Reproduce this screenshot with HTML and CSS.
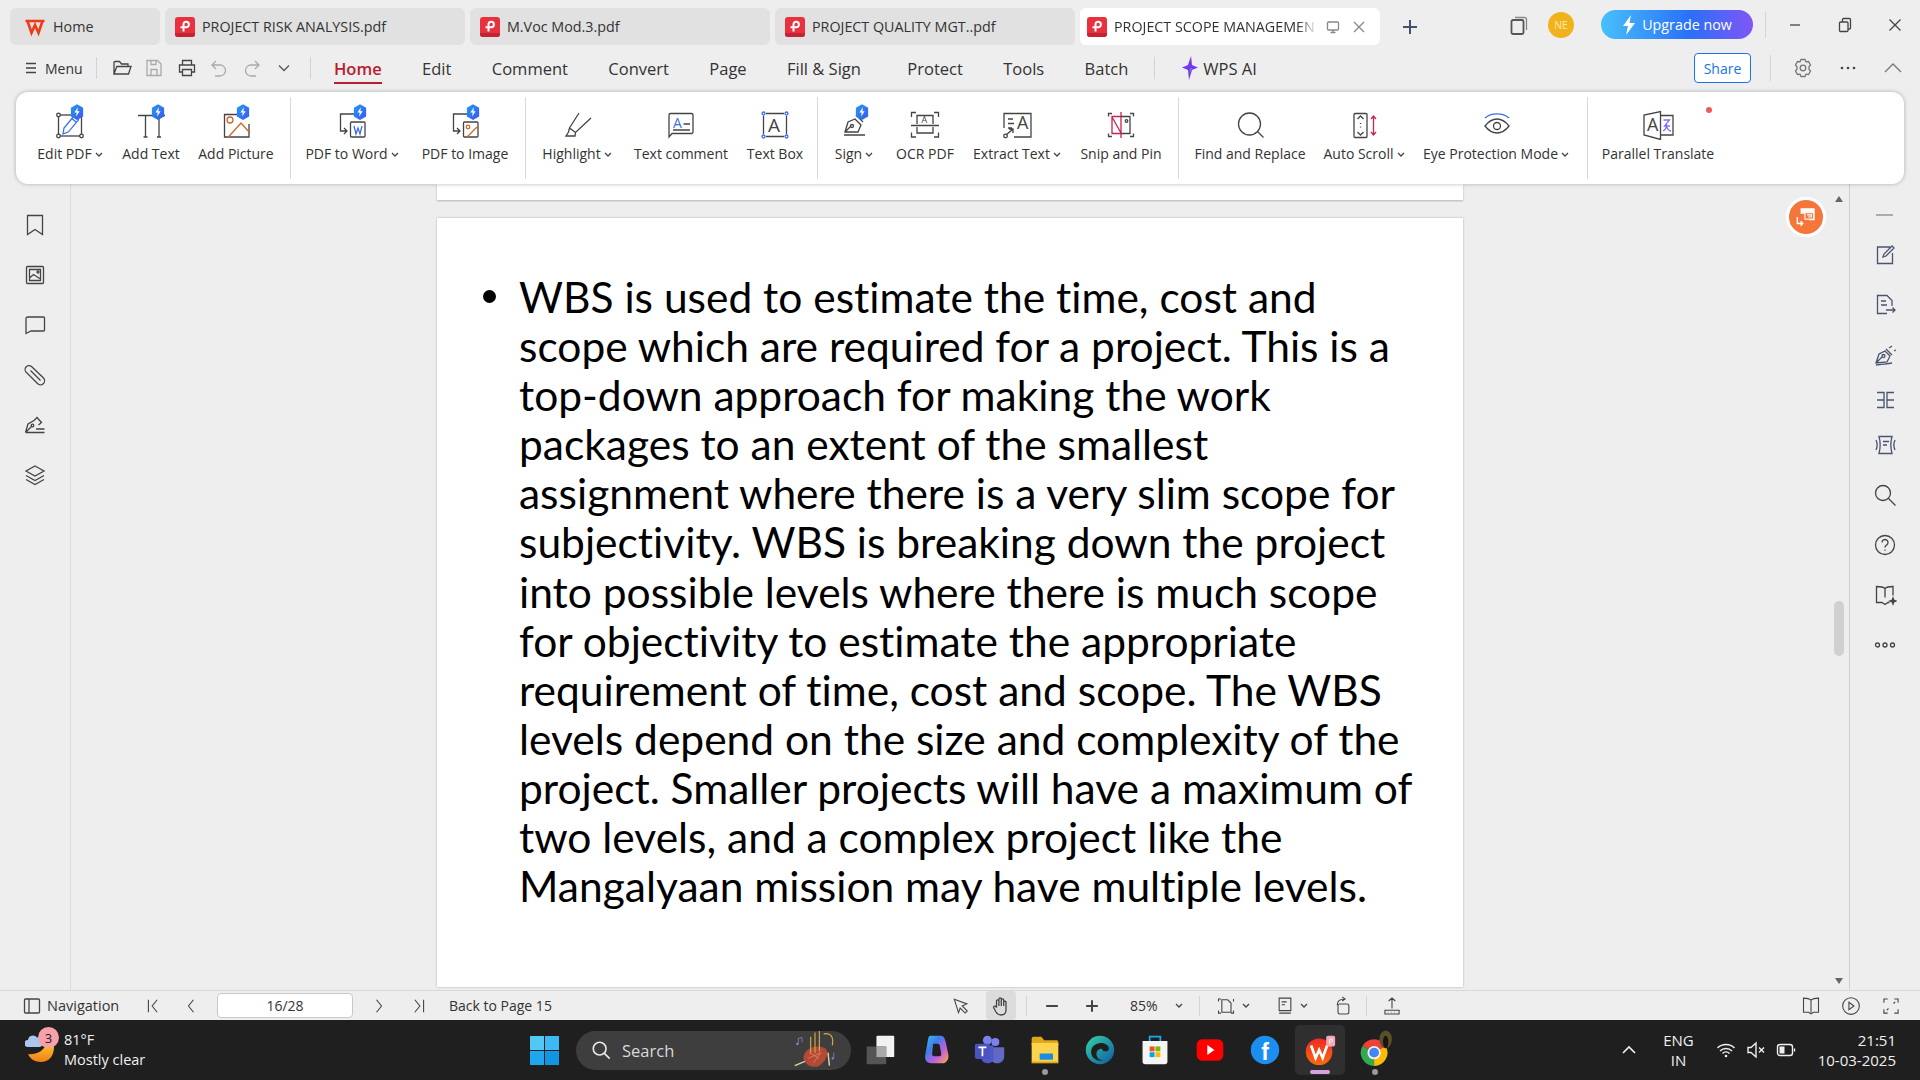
FILE: index.html
```html
<!DOCTYPE html>
<html>
<head>
<meta charset="UTF-8">
<title>PROJECT SCOPE MANAGEMENT.pdf</title>
<link rel="stylesheet" href="styles.css">
</head>
<body>
<svg class="defs" width="0" height="0">
  <defs>
    <linearGradient id="bdg" x1="0" y1="0" x2="1" y2="1"><stop offset="0" stop-color="#1f9cf6"/><stop offset="1" stop-color="#3f55f2"/></linearGradient>
    <linearGradient id="moon" x1="0" y1="0" x2="0" y2="1"><stop offset="0" stop-color="#fbc02d"/><stop offset="1" stop-color="#f07d1a"/></linearGradient>
    <linearGradient id="cop" x1="0" y1="0" x2="1" y2="1"><stop offset="0" stop-color="#2fc0f2"/><stop offset=".35" stop-color="#3f7fe8"/><stop offset=".65" stop-color="#c65ce0"/><stop offset="1" stop-color="#f7b13a"/></linearGradient>
    <linearGradient id="edge" x1="0" y1="0" x2="1" y2="1"><stop offset="0" stop-color="#39d2a8"/><stop offset="1" stop-color="#0c59a4"/></linearGradient>
    <linearGradient id="wpsg" x1="0" y1="0" x2="0" y2="1"><stop offset="0" stop-color="#ee2a24"/><stop offset="1" stop-color="#f86a10"/></linearGradient>
    <symbol id="badge" viewBox="0 0 16 18">
      <path d="M8 0l7 4v10l-7 4-7-4V4z" fill="url(#bdg)" stroke="none"/>
      <path d="M9 3.500L5 9.600h2.600L7 14l4-6H8.400z" fill="#fff" stroke="none"/>
    </symbol>
    <symbol id="pdf" viewBox="0 0 20 20">
      <rect width="20" height="20" rx="3" fill="#e8303f"/>
      <path d="M0 16h20v1a3 3 0 0 1-3 3H3a3 3 0 0 1-3-3z" fill="#c22433"/>
      <path d="M8.500 14.500V7.500a2.700 2.700 0 1 1 2.700 2.700H5.500" fill="none" stroke="#fff" stroke-width="2"/>
    </symbol>
    <symbol id="caret" viewBox="0 0 8 5"><path d="M1 1l3 3 3-3" fill="none" stroke="#444" stroke-width="1.300"/></symbol>
  </defs>
</svg>

<div class="titlebar">
  <div class="tab tab-home">
    <svg class="tab-ico" viewBox="0 0 20 20"><path class="wps-mark" d="M.5 4h19M2.500 4l4 12 3.500-8 3.500 8 4-12"/></svg>
    <span>Home</span>
  </div>
  <div class="tab"><svg class="tab-ico"><use href="#pdf"/></svg><span>PROJECT RISK ANALYSIS.pdf</span></div>
  <div class="tab"><svg class="tab-ico"><use href="#pdf"/></svg><span>M.Voc Mod.3.pdf</span></div>
  <div class="tab"><svg class="tab-ico"><use href="#pdf"/></svg><span>PROJECT QUALITY MGT..pdf</span></div>
  <div class="tab tab-active">
    <svg class="tab-ico"><use href="#pdf"/></svg>
    <span class="tab-clip">PROJECT SCOPE MANAGEMEN</span>
    <svg class="ico16" viewBox="0 0 16 16"><rect x="2.500" y="3" width="11" height="8" rx="1"/><path d="M8 11v2.500M5.500 13.500h5"/></svg>
    <svg class="ico16 tab-x" viewBox="0 0 16 16"><path d="M3 3l10 10M13 3L3 13"/></svg>
  </div>
  <svg class="tab-plus" viewBox="0 0 16 16"><path d="M8 1v14M1 8h14"/></svg>
  <div class="win-area">
    <svg class="ico20 restore" viewBox="0 0 20 20"><rect x="2.500" y="5" width="12" height="14" rx="1.500"/><path class="restore-back" d="M6 2.500h9.500a2 2 0 0 1 2 2V15"/></svg>
    <div class="avatar">NE</div>
    <div class="upgrade">
      <svg class="bolt" viewBox="0 0 14 20"><path d="M9 0L1 11h5l-2 9 9-12H7.500z" fill="#fff"/></svg>
      <span>Upgrade now</span>
    </div>
    <div class="vsep vsep-win"></div>
    <svg class="ico16 win-btn win-min" viewBox="0 0 16 16"><path d="M3 8h10"/></svg>
    <svg class="ico16 win-btn win-max" viewBox="0 0 16 16"><rect x="2.500" y="5" width="8.500" height="9.500" rx="1"/><path d="M5.500 5V2.500a1 1 0 0 1 1-1h6a1 1 0 0 1 1 1V11a1 1 0 0 1-1 1H11"/></svg>
    <svg class="ico16 win-btn" viewBox="0 0 16 16"><path d="M2.500 2.500l11 11M13.500 2.500l-11 11"/></svg>
  </div>
</div>

<div class="menubar">
  <div class="menu-btn">
    <svg class="ico14" viewBox="0 0 14 14"><path d="M2 2.500h10M2 7h10M2 11.500h10"/></svg>
    <span>Menu</span>
  </div>
  <div class="vsep vsep-q1"></div>
  <div class="quick">
    <svg class="ico20" viewBox="0 0 20 20"><path d="M2 16V4.500a1 1 0 0 1 1-1h4.500l2 2.500H16v2.500M2 16l2.800-7.500H19L16.500 16z"/></svg>
    <svg class="ico20 faded" viewBox="0 0 20 20"><path d="M3 2.500h10.500L17 6v11.500H3zM7 2.500v4h5v-4M7 17.500v-6h6v6"/></svg>
    <svg class="ico20" viewBox="0 0 20 20"><path d="M5.500 7V2.500h9V7M5.500 14H2.500V7h15v7h-3M5.500 11.500h9v6h-9z"/></svg>
    <svg class="ico20 faded" viewBox="0 0 20 20"><path d="M7 3L3 7l4 4M3 7h8a5.500 5.500 0 0 1 0 11H6"/></svg>
    <svg class="ico20 faded" viewBox="0 0 20 20"><path d="M13 3l4 4-4 4M17 7H9a5.500 5.500 0 0 0 0 11h5"/></svg>
    <svg class="ico20 ico-c" viewBox="0 0 20 20"><path d="M5 7.500l5 5 5-5"/></svg>
  </div>
  <div class="vsep vsep-q2"></div>
  <nav class="menu-tabs">
    <span class="active">Home</span>
    <span>Edit</span>
    <span>Comment</span>
    <span>Convert</span>
    <span>Page</span>
    <span>Fill &amp; Sign</span>
    <span class="m-protect">Protect</span>
    <span>Tools</span>
    <span>Batch</span>
  </nav>
  <div class="vsep vsep-ai"></div>
  <div class="wps-ai">
    <svg class="ai-ico" viewBox="0 0 16 24"><path d="M9 0L6 9 0 11.500 6 14l1 10 3-10 6-2.500L10 9z" fill="#7a35f0"/><path d="M8.500 12l-1.500 6 3-6z" fill="#3aa5f5"/></svg>
    <span>WPS AI</span>
  </div>
  <div class="menu-right">
    <div class="share">Share</div>
    <div class="vsep vsep-share"></div>
    <svg class="ico20 gear" viewBox="0 0 20 20"><path d="M8 1.500h4l1 2.300 2.500-.3 2 3.500L16 8.800v2.400l1.500 1.800-2 3.500-2.500-.3-1 2.300H8l-1-2.300-2.500.3-2-3.500L4 11.200V8.800L2.500 7l2-3.500 2.500.3z"/><circle cx="10" cy="10" r="2.800"/></svg>
    <svg class="ico20 dots" viewBox="0 0 20 20"><circle cx="4" cy="10" r="1.300"/><circle cx="10" cy="10" r="1.300"/><circle cx="16" cy="10" r="1.300"/></svg>
    <svg class="ico20 gear" viewBox="0 0 20 20"><path d="M2 14l8-8 8 8"/></svg>
  </div>
</div>

<div class="ribbon">
  <div class="rgroup g1">
    <div class="tool w80">
      <svg class="ric" viewBox="0 0 44 36"><rect x="10.500" y="11" width="23" height="21"/><g class="knob"><circle cx="10.500" cy="11" r="1.800"/><circle cx="10.500" cy="32" r="1.800"/><circle cx="33.500" cy="32" r="1.800"/></g><path class="blue" d="M15 30l1-6 10-12 4.500 3.800-10 12zM23.800 14.500l4.500 3.800"/><use href="#badge" x="22" y="0" width="14" height="16"/></svg>
      <div class="lbl">Edit PDF<svg class="caret"><use href="#caret"/></svg></div>
    </div>
    <div class="tool w82">
      <svg class="ric" viewBox="0 0 44 36"><path d="M9 11.500h27M16.500 11.500V33M30 11.500V33M14.500 33h4M28 33h4"/><use href="#badge" x="22" y="0" width="14" height="16"/></svg>
      <div class="lbl">Add Text</div>
    </div>
    <div class="tool w88">
      <svg class="ric" viewBox="0 0 44 36"><path d="M30 10.500H10.500V33h24.500V20"/><circle class="orange" cx="16" cy="16" r="3"/><path class="orange" d="M14 33.500L27 19l9 10"/><use href="#badge" x="22" y="0" width="14" height="16"/></svg>
      <div class="lbl">Add Picture</div>
    </div>
  </div>
  <div class="rgroup g2">
    <div class="tool w116">
      <svg class="ric" viewBox="0 0 44 36"><path d="M27 10H10.500v17H17M14 24l3 3-3 3"/><rect x="20.500" y="18" width="14.500" height="15" rx="1"/><path class="blue" d="M24 22l2 8 2-6 2 6 2-8"/><use href="#badge" x="23" y="0" width="14" height="16"/></svg>
      <div class="lbl">PDF to Word<svg class="caret"><use href="#caret"/></svg></div>
    </div>
    <div class="tool w110">
      <svg class="ric" viewBox="0 0 44 36"><path d="M27 10H10.500v17H17M14 24l3 3-3 3"/><rect x="20.500" y="18" width="14.500" height="15" rx="1"/><circle class="orange" cx="25" cy="23" r="1.800"/><path class="orange" d="M24 33l10-10"/><use href="#badge" x="23" y="0" width="14" height="16"/></svg>
      <div class="lbl">PDF to Image</div>
    </div>
  </div>
  <div class="rgroup g3">
    <div class="tool w90">
      <svg class="ric" viewBox="0 0 44 36"><path d="M24 9L14.500 24l6 4.500L36 14M14.500 24l-1 4-2.500 4h9l.5-3.500"/></svg>
      <div class="lbl">Highlight<svg class="caret"><use href="#caret"/></svg></div>
    </div>
    <div class="tool w118">
      <svg class="ric" viewBox="0 0 44 36"><path d="M11.500 9.500h21a1.500 1.500 0 0 1 1.500 1.500v17a1.500 1.500 0 0 1-1.500 1.500H13L10 33V11a1.500 1.500 0 0 1 1.500-1.500zM24.500 20H31M14 26h17"/><text class="svg-a blue-t" x="14" y="23.500">A</text></svg>
      <div class="lbl">Text comment</div>
    </div>
    <div class="tool w70">
      <svg class="ric" viewBox="0 0 44 36"><path d="M13 9.500h18M13 32.500h18M10.500 12v18M33.500 12v18"/><g class="knob-b"><circle cx="10.500" cy="9.500" r="1.500"/><circle cx="33.500" cy="9.500" r="1.500"/><circle cx="10.500" cy="32.500" r="1.500"/><circle cx="33.500" cy="32.500" r="1.500"/></g><text class="svg-a svg-big" x="15" y="28">A</text></svg>
      <div class="lbl">Text Box</div>
    </div>
  </div>
  <div class="rgroup g4">
    <div class="tool w60">
      <svg class="ric" viewBox="0 0 44 36"><path d="M12 31h21M13 28l3-10 7-3 6 6-3 7zM13 28l6-6M24 11l7 7"/><circle cx="20" cy="22" r="1.500"/><use href="#badge" x="23" y="0" width="14" height="16"/></svg>
      <div class="lbl">Sign<svg class="caret"><use href="#caret"/></svg></div>
    </div>
    <div class="tool w82">
      <svg class="ric" viewBox="0 0 44 36"><path d="M13 8.500H8.500V13M31 8.500h4.500V13M13 33h-4.500v-4.500M31 33h4.500v-4.500M14 20V11.500h16V20M14 23v6h16v-6M8 21.500h28"/><text class="svg-a svg-sm" x="18.500" y="19">A</text></svg>
      <div class="lbl">OCR PDF</div>
    </div>
    <div class="tool w102">
      <svg class="ric" viewBox="0 0 44 36"><path d="M9 24V9.500h27V33H19M13 15h5M13 19.500h6M13 24h4M18 25l-7 6M14 25h4v4"/><circle cx="10.500" cy="32" r="1.800"/><text class="svg-a svg-mid" x="22" y="25">A</text></svg>
      <div class="lbl">Extract Text<svg class="caret"><use href="#caret"/></svg></div>
    </div>
    <div class="tool w106">
      <svg class="ric" viewBox="0 0 44 36"><path d="M13 9.500H9.500v3M31 9.500h3.500v3M13 32.500H9.500v-3M31 32.500h3.500v-3"/><path class="red" d="M13 12.500h9v17h-9zM13 13l9 16M22 8v26"/><path d="M22 12.500h9v17h-9"/><circle cx="27.500" cy="17" r="1.300"/></svg>
      <div class="lbl">Snip and Pin</div>
    </div>
  </div>
  <div class="rgroup g5">
    <div class="tool w130">
      <svg class="ric" viewBox="0 0 44 36"><circle cx="21.500" cy="20" r="11"/><path d="M29.500 27.500l6 6"/></svg>
      <div class="lbl">Find and Replace</div>
    </div>
    <div class="tool w98">
      <svg class="ric" viewBox="0 0 44 36"><rect x="12" y="9.500" width="13" height="24" rx="1"/><path d="M15.500 15l3-3 3 3M15.500 28l3 3 3-3M18.500 19v1M18.500 22.500v1"/><path class="red" d="M31.500 12v19M29 15l2.500-3 2.500 3M29 28l2.500 3 2.500-3"/></svg>
      <div class="lbl">Auto Scroll<svg class="caret"><use href="#caret"/></svg></div>
    </div>
    <div class="tool w166">
      <svg class="ric" viewBox="0 0 44 36"><path class="blue" d="M11 14c6-5.500 18-5.500 24 0"/><path d="M11 22c3.500-4.500 7.500-7 12-7s8.500 2.500 12 7c-3.500 4.500-7.500 7-12 7s-8.500-2.500-12-7z"/><circle cx="23" cy="22" r="3.500"/></svg>
      <div class="lbl">Eye Protection Mode<svg class="caret"><use href="#caret"/></svg></div>
    </div>
  </div>
  <div class="rgroup g6">
    <div class="tool w126">
      <svg class="ric" viewBox="0 0 44 36"><path d="M24.500 7.500v28L8 31V11zM24.500 11.500H37v19.500H24.500"/><text class="svg-a svg-mid" x="11" y="27">A</text><path class="purple" d="M27.500 16h6l-5 6h5.500M30.500 20c0 4-1 6-3.500 7M30 21c1 3 3 6 5 6"/></svg>
      <div class="lbl">Parallel Translate</div>
    </div>
    <span class="red-dot"></span>
  </div>
</div>

<div class="main">
  <aside class="side-left">
    <svg class="ico24" viewBox="0 0 24 24"><path d="M4.500 2.500h15v19L12 16.500l-7.500 5z"/></svg>
    <svg class="ico24" viewBox="0 0 24 24"><rect x="3.500" y="3.500" width="17" height="17" rx="1"/><path d="M6.500 6.500h11v11h-11zM6.500 15l4-3.500 7 4.500"/><circle cx="15" cy="9" r="1"/></svg>
    <svg class="ico24" viewBox="0 0 24 24"><path d="M4.500 4h16a1 1 0 0 1 1 1v12a1 1 0 0 1-1 1H8l-5 2.500V5.500a1.500 1.500 0 0 1 1.500-1.500z"/></svg>
    <svg class="ico24" viewBox="0 0 24 24"><path d="M8.500 3.500l12 11.500a4 4 0 0 1-6 5.500L3.500 9.500a3.700 3.700 0 0 1 5-6zM7.500 7.500l10 10"/></svg>
    <svg class="ico24" viewBox="0 0 24 24"><path d="M2.500 19.500l2.500-8.500 6-3.500 3-3 4.500 5-3 2.500M2.500 19.500h9M2.500 19.500l6-6M13 16h8.500M11.500 19.500h10"/><circle cx="9.500" cy="12.500" r="1.300"/></svg>
    <svg class="ico24" viewBox="0 0 24 24"><path d="M12 3l9 5-9 5-9-5zM3 12.500l9 5 9-5M3 16.500l9 5 9-5"/></svg>
  </aside>

  <div class="doc">
    <div class="page-stub"></div>
    <div class="page">
      <span class="bullet"></span>
      <div class="page-text">
        <span>WBS is used to estimate the time, cost and</span>
        <span>scope which are required for a project. This is a</span>
        <span>top-down approach for making the work</span>
        <span>packages to an extent of the smallest</span>
        <span>assignment where there is a very slim scope for</span>
        <span>subjectivity. WBS is breaking down the project</span>
        <span>into possible levels where there is much scope</span>
        <span>for objectivity to estimate the appropriate</span>
        <span>requirement of time, cost and scope. The WBS</span>
        <span>levels depend on the size and complexity of the</span>
        <span>project. Smaller projects will have a maximum of</span>
        <span>two levels, and a complex project like the</span>
        <span>Mangalyaan mission may have multiple levels.</span>
      </div>
    </div>
  </div>

  <div class="scroll-col">
    <span class="arr-up"></span>
    <span class="thumb"></span>
    <span class="arr-down"></span>
  </div>

  <div class="float-btn">
    <svg viewBox="0 0 24 24"><path d="M7 4h13v11H15V9H7z" fill="#fff"/><rect x="11" y="8" width="8" height="6" fill="#f5763a" stroke="#fff"/><path d="M13 10h4v2h-3" fill="none" stroke="#fff"/><path d="M4 12v6h5M7 16l2 2-2 2" fill="none" stroke="#fff" stroke-width="1.300"/></svg>
  </div>

  <aside class="side-right">
    <svg class="ico24 sr first" viewBox="0 0 24 24"><path d="M3 12h17"/></svg>
    <svg class="ico24 sr" viewBox="0 0 24 24"><path d="M17 4H4.500v16.500h15V10M10 14l1-3 8-8 2 2-8 8z"/></svg>
    <svg class="ico24 sr" viewBox="0 0 24 24"><path d="M14 20.500H4.500v-18H14l5 5V13M8 8h5M8 12h6M13 17h9M19.500 14.500L22 17l-2.500 2.500"/></svg>
    <svg class="ico24 sr" viewBox="0 0 24 24"><path d="M3 20l3-9 6-3 5 5-3 6zM3 20l6-6M13 6l6 6M16 5l3-2M21 8l2-1M3 22c6-1 12-1 16-2"/><circle cx="10.500" cy="13" r="1.500"/></svg>
    <svg class="ico24 sr near" viewBox="0 0 24 24"><path d="M4 4.500h7v15H4M4 12h7M21 4.500h-7v15h7M14 12h7"/></svg>
    <svg class="ico24 sr near" viewBox="0 0 24 24"><path d="M6 3.500h13c-1.500 5.500-1.500 11.500 0 17H6c1.500-5.500 1.500-11.500 0-17zM10 8.500h6M10 12h4M3 7c1.500 3.500 1.500 7 0 10M22 7c-1.500 3.500-1.500 7 0 10"/></svg>
    <svg class="ico24 sr dark" viewBox="0 0 24 24"><circle cx="10" cy="10" r="7.500"/><path d="M15.500 15.500l7 7"/></svg>
    <svg class="ico24 sr dark" viewBox="0 0 24 24"><circle cx="12" cy="12" r="9.500"/><path d="M9 9.500a3 3 0 1 1 4.500 2.600c-1 .6-1.500 1.200-1.500 2.400M12 16.500v1.200"/></svg>
    <svg class="ico24 sr dark" viewBox="0 0 24 24"><path d="M12 5.500C10 3.500 6 3.500 3.500 3.500v16H9l3 2 3-2h1.500M12 5.500C14 3.500 18 3.500 20 3.500v9M12 5.500v9"/><path d="M20 15l.8 2.200 2.200.8-2.200.8-.8 2.200-.8-2.200-2.200-.8 2.200-.8z" fill="#444"/></svg>
    <svg class="ico24 sr dark" viewBox="0 0 24 24"><circle cx="4.500" cy="12" r="2"/><circle cx="12" cy="12" r="2"/><circle cx="19.500" cy="12" r="2"/></svg>
  </aside>
</div>

<div class="statusbar">
  <div class="sb-left">
    <svg class="ico18" viewBox="0 0 18 18"><rect x="1.500" y="2" width="15" height="14" rx="1"/><path d="M6 2v14"/></svg>
    <span class="nav-lbl">Navigation</span>
    <svg class="sb-btn sb-first" viewBox="0 0 24 24"><path d="M6.500 4.500v15M17 4.500l-6 7.500 6 7.500"/></svg>
    <svg class="sb-btn sb-prev" viewBox="0 0 24 24"><path d="M15 4.500l-6 7.500 6 7.500"/></svg>
    <div class="page-input">16/28</div>
    <svg class="sb-btn" viewBox="0 0 24 24"><path d="M9 4.500l6 7.500-6 7.500"/></svg>
    <svg class="sb-btn sb-last" viewBox="0 0 24 24"><path d="M17.500 4.500v15M7 4.500l6 7.500-6 7.500"/></svg>
    <span class="back-lbl">Back to Page 15</span>
  </div>
  <div class="sb-mid">
    <svg class="sb-btn sb-arrow" viewBox="0 0 24 24"><path d="M4 4l15 5.500-5.500 2.500 6 6-2.500 2.500-6-6L9 20z"/></svg>
    <div class="hand"><svg class="ico20" viewBox="0 0 20 20"><path d="M5.500 11V5a1.200 1.200 0 0 1 2.400 0V10V3a1.200 1.200 0 0 1 2.400 0v7-6a1.200 1.200 0 0 1 2.400 0v6-4a1.200 1.200 0 0 1 2.300 0v8c0 3-2 5-5 5-2.500 0-3.800-1-5-3l-2.200-4c-.8-1.500 1-2.600 2-1.300z"/></svg></div>
    <div class="vsep vsep-sb"></div>
    <svg class="sb-btn sb-minus" viewBox="0 0 24 24"><path class="thick" d="M5 12h14"/></svg>
    <svg class="sb-btn sb-plus" viewBox="0 0 24 24"><path class="thick" d="M5 12h14M12 5v14"/></svg>
    <span class="zoom-val">85%</span>
    <svg class="caret caret-z"><use href="#caret"/></svg>
    <div class="vsep vsep-sb vsep-z"></div>
    <svg class="sb-btn sb-fit" viewBox="0 0 24 24"><path d="M7 4.500h7l4 4v11H7zM3 6.500v-3h3M3 17.500v3h3M21 6.500v-3M21 17.500v3h-3"/></svg>
    <svg class="caret"><use href="#caret"/></svg>
    <svg class="sb-btn sb-view" viewBox="0 0 24 24"><path d="M5 2.500h14v15H5zM8 7h6M8 10.500h4M5 20.500h14"/></svg>
    <svg class="caret"><use href="#caret"/></svg>
    <svg class="sb-btn sb-rot" viewBox="0 0 24 24"><rect x="6" y="9.500" width="13" height="12" rx="2"/><path d="M5 11c0-5 3-7.500 9-7.500M11 1l3.500 2.500L11 6"/></svg>
    <div class="vsep vsep-sb vsep-e"></div>
    <svg class="sb-btn sb-exp" viewBox="0 0 24 24"><path d="M12 15V2.500M8 6l4-3.500L16 6M3.500 17h17v4.500h-17zM7 19.500h.5M11 19.500h.5M15 19.500h.5"/></svg>
  </div>
  <div class="sb-right">
    <svg class="sb-btn" viewBox="0 0 24 24"><path d="M12 5c-2-1.800-5-2.500-9-2.500v17h6l3 2 3-2h6v-17c-4 0-7 .7-9 2.500zM12 5v15"/></svg>
    <svg class="sb-btn" viewBox="0 0 24 24"><circle cx="12" cy="12" r="10"/><path d="M9.500 7.500l6 4.500-6 4.500z"/></svg>
    <svg class="sb-btn" viewBox="0 0 24 24"><path d="M8 3.500H3.500V8M16 3.500h4.500V8M8 20.500H3.500V16M16 20.500h4.500V16M15 9l2-2M7 17l2-2"/></svg>
  </div>
</div>

<div class="taskbar">
  <div class="weather">
    <svg class="weather-ico" viewBox="0 0 32 36"><path d="M3 22c5 1 14-1 18-9 5 0 8 0 8 2 0 10-6 15-13 15-6 0-11-3-13-8z" fill="url(#moon)"/><path d="M3 15a3.500 3.500 0 0 1 0-7 5 5 0 0 1 9-2.500A4 4 0 0 1 15 15z" fill="#a8c6ee"/></svg>
    <span class="w-badge">3</span>
    <div class="w-text"><span class="w-temp">81°F</span><span>Mostly clear</span></div>
  </div>
  <svg class="win-logo" viewBox="0 0 29 29">
    <rect width="14" height="14" fill="#54c8f5"/><rect x="15" width="14" height="14" fill="#3dbaf2"/>
    <rect y="15" width="14" height="14" fill="#1ea7ee"/><rect x="15" y="15" width="14" height="14" fill="#1296e4"/>
  </svg>
  <div class="search">
    <svg class="search-ico" viewBox="0 0 22 22"><circle cx="9.500" cy="9.500" r="7"/><path d="M14.500 14.500l6 6"/></svg>
    <span>Search</span>
    <svg class="bagpipe" viewBox="0 0 60 54">
      <path d="M14 36c2-14 20-18 30-12 6 5 2 18-8 24-10 5-22-2-22-12z" fill="#b24a35"/>
      <path d="M22 30l14 8M20 38l18-8M28 44l10-14" stroke="#e88a6a" fill="none"/>
      <path d="M30 2v28M36 0v28M24 8v22M42 4c10-2 14 4 12 16" stroke="#d8a84a" stroke-width="1.600" fill="none"/>
      <path d="M2 48l14-6M48 30l2 18" stroke="#e0d0a0" stroke-width="2" fill="none"/>
      <path d="M7 10v8M7 10l5-1v7" stroke="#8f86d6" fill="none"/><circle cx="5.500" cy="18" r="1.600" fill="#8f86d6"/>
      <path d="M56 30v8" stroke="#8f86d6"/><circle cx="54.500" cy="38" r="1.600" fill="#8f86d6"/>
    </svg>
  </div>
  <div class="apps">
    <div class="app">
      <svg viewBox="0 0 36 36"><rect x="14" y="2" width="20" height="24" rx="1" fill="#f2f2f2"/><rect x="3" y="14" width="22" height="20" rx="1" fill="#555"/><rect x="14" y="14" width="11" height="12" fill="#aaa"/></svg>
    </div>
    <div class="app">
      <svg viewBox="0 0 36 36"><path d="M13 2h11c4 0 5 3 6 7l3 14c1 5-2 10-7 10H14c-5 0-8-4-7-9l3-17c.5-3 1-5 3-5z" fill="url(#cop)"/><path d="M16 11h5c1.500 0 2 1 2.500 2.500l1.500 9c.3 1.500-.5 2.500-2 2.500h-6c-1.500 0-2.500-1-2.300-2.500l1-9c.1-1.500.3-2.500.8-2.500z" fill="#1f1f1f"/></svg>
    </div>
    <div class="app">
      <svg viewBox="0 0 36 36"><circle cx="24" cy="9" r="4.500" fill="#7b83eb"/><path d="M18 15h16v10c0 5-4 8-8 8s-8-3-8-8z" fill="#6169c4"/><circle cx="15" cy="7" r="5" fill="#7b83eb"/><path d="M8 13h14v14c0 4-3 6-7 6s-7-3-7-7z" fill="#5059c9"/><rect x="1" y="11" width="17" height="17" rx="2" fill="#4b53bc"/><path d="M5 15h9M9.500 15v10" stroke="#fff" stroke-width="2"/></svg>
    </div>
    <div class="app app-dot">
      <svg viewBox="0 0 36 36"><path d="M3 5a2 2 0 0 1 2-2h9l3 4h14a2 2 0 0 1 2 2v4H3z" fill="#e0a51c"/><path d="M3 10h30v22H3z" fill="#fcd34d"/><rect x="12" y="22" width="15" height="7" rx="1" fill="#1a8de0"/><rect x="3" y="31" width="30" height="2" fill="#e0a51c"/></svg>
    </div>
    <div class="app">
      <svg viewBox="0 0 36 36"><circle cx="18" cy="18" r="16" fill="url(#edge)"/><path d="M8 20c0-6 5-10 11-10 5 0 9 3 9 6.500 0 2-2 3-4 3-3 0-3-2-4-3-3 0-6 2-6 6s3 7 8 7c-8 2-14-3-14-9.500z" fill="#1f1f1f"/></svg>
    </div>
    <div class="app">
      <svg viewBox="0 0 36 36"><path d="M12 8V3h12v5" stroke="#1ea7ee" stroke-width="2" fill="none"/><path d="M4 8h28v23a3 3 0 0 1-3 3H7a3 3 0 0 1-3-3z" fill="#f4f4f4"/><rect x="12" y="14" width="5.500" height="5.500" fill="#f25022"/><rect x="18.500" y="14" width="5.500" height="5.500" fill="#7fba00"/><rect x="12" y="20.500" width="5.500" height="5.500" fill="#00a4ef"/><rect x="18.500" y="20.500" width="5.500" height="5.500" fill="#ffb900"/></svg>
    </div>
    <div class="app">
      <svg viewBox="0 0 36 36"><rect x="3" y="6" width="30" height="24" rx="6" fill="#f00"/><path d="M15 12.500l8 5.500-8 5.500z" fill="#fff"/></svg>
    </div>
    <div class="app">
      <svg viewBox="0 0 36 36"><circle cx="18" cy="18" r="16" fill="#1c8ef0"/><text class="fb" x="18" y="29">f</text></svg>
    </div>
    <div class="app app-on">
      <svg viewBox="0 0 36 36"><circle cx="17" cy="20" r="15" fill="url(#wpsg)"/><path d="M8 13l5 14 4-9 4 9 5-14" stroke="#fff" stroke-width="3" fill="none"/><rect x="25" y="2" width="10" height="12" rx="2" fill="#f3a9b5"/><path d="M29 11V7a1.500 1.500 0 1 1 1.500 1.500" stroke="#fff" fill="none"/></svg>
    </div>
    <div class="app app-dot">
      <svg viewBox="0 0 36 36"><path d="M17 21L4 13.500A15 15 0 0 1 30 13.500z" fill="#ea4335"/><path d="M17 21L4 13.500A15 15 0 0 0 17 36z" fill="#34a853"/><path d="M17 21L30 13.500A15 15 0 0 1 17 36z" fill="#fbbc05"/><circle cx="17" cy="21" r="7.500" fill="#f2f2f2"/><circle cx="17" cy="21" r="5.500" fill="#4285f4"/><ellipse cx="30" cy="6" rx="7" ry="10" fill="#5a5028"/><ellipse cx="30" cy="9" rx="3" ry="7" fill="#1c1410"/></svg>
    </div>
  </div>
  <div class="tray">
    <svg class="tray-up" viewBox="0 0 16 16"><path d="M2 11l6-6 6 6"/></svg>
    <div class="lang"><span>ENG</span><span>IN</span></div>
    <svg class="tray-ico" viewBox="0 0 20 20"><path d="M1.500 8a12 12 0 0 1 17 0M4 11a8.500 8.500 0 0 1 12 0M6.500 13.500a5 5 0 0 1 7 0"/><circle class="on" cx="10" cy="16" r="1.300"/></svg>
    <svg class="tray-ico" viewBox="0 0 20 20"><path d="M2 7.500h3L10 3v14l-5-4.500H2zM13 7.500l5 5M18 7.500l-5 5"/></svg>
    <svg class="tray-ico" viewBox="0 0 20 20"><rect x="1.500" y="4.500" width="15" height="11" rx="2.500"/><rect class="on" x="3.500" y="6.500" width="5" height="7"/><path d="M18.500 8.500v3"/></svg>
    <div class="clock"><span>21:51</span><span>10-03-2025</span></div>
  </div>
</div>
</body>
</html>
```
FILE: styles.css
```css
* {
    box-sizing: border-box;
}
html, body {
    margin: 0;
    height: 1080px;
    overflow: hidden;
}
body {
    font-family: "Open Sans", "Noto Sans", sans-serif;
    background-color: #eeeeee;
    color: #333;
    display: flex;
    flex-direction: column;
}
.defs {
    position: absolute;
}
svg {
    flex-shrink: 0;
    display: block;
}

/* line icons */
.ico14, .ico16, .ico18, .ico20, .ico24, .ric, .sb-btn {
    fill: none;
    stroke: #444;
    stroke-width: 1.3;
}
.ico14 { width: 14px; height: 14px; }
.ico16 { width: 16px; height: 16px; }
.ico18 { width: 18px; height: 18px; }
.ico20 { width: 20px; height: 20px; }
.ico24 { width: 24px; height: 24px; }
.faded { stroke: #aaa; }
.vsep {
    width: 1px;
    background-color: #d4d4d4;
    flex-shrink: 0;
}

/* title bar */
.titlebar {
    height: 46px;
    padding: 8px 0 1px 10px;
    display: flex;
    align-items: stretch;
    gap: 5px;
    flex-shrink: 0;
}
.tab {
    width: 300px;
    background-color: #e1e1e1;
    border-radius: 6px;
    display: flex;
    align-items: center;
    padding-left: 10px;
    font-size: 14.3px;
    color: #333;
}
.tab-home {
    width: 150px;
    padding-left: 15px;
}
.tab-home span {
    margin-left: 1px;
}
.wps-mark {
    fill: none;
    stroke: #f03a17;
    stroke-width: 2.6;
}
.tab-active {
    background-color: #fff;
    width: 300px;
    padding-left: 7px;
}
.tab-ico {
    width: 20px;
    height: 20px;
    margin-right: 7px;
}
.tab-clip {
    width: 204px;
    white-space: nowrap;
    -webkit-mask-image: linear-gradient(90deg, #000 90%, transparent);
    mask-image: linear-gradient(90deg, #000 90%, transparent);
}
.tab-active .ico16 {
    stroke: #888;
    margin-left: 7px;
}
.tab-active .tab-x {
    margin-left: 10px;
}
.tab-plus {
    width: 16px;
    height: 16px;
    margin: 11px 0 0 17px;
    fill: none;
    stroke: #44506e;
    stroke-width: 2;
}
.win-area {
    margin-left: auto;
    display: flex;
    align-items: center;
    padding: 0 17px 4px 0;
}
.restore {
    stroke: #555;
    stroke-width: 1.8;
}
.restore-back {
    stroke: #888;
    stroke-width: 1.3;
}
.avatar {
    width: 26px;
    height: 26px;
    border-radius: 50%;
    background-color: #f0b31c;
    color: #fdeab0;
    font-size: 10.5px;
    display: flex;
    align-items: center;
    justify-content: center;
    margin-left: 19px;
}
.upgrade {
    width: 152px;
    height: 29px;
    margin-left: 27px;
    border-radius: 15px;
    background: linear-gradient(90deg, #48c0fb, #2a70f8 58%, #7f56f5);
    color: #fff;
    font-size: 14.3px;
    display: flex;
    align-items: center;
    justify-content: center;
    gap: 6px;
}
.bolt {
    width: 14px;
    height: 20px;
}
.vsep-win {
    height: 26px;
    margin: 0 18px 0 12px;
}
.win-btn {
    stroke: #444;
}
.win-min { margin: 0 34px 0 3px; }
.win-max { margin-right: 34px; }

/* menu bar */
.menubar {
    height: 46px;
    display: flex;
    align-items: center;
    padding: 0 0 2px 24px;
    flex-shrink: 0;
    font-size: 16.5px;
}
.menu-btn {
    display: flex;
    align-items: center;
    gap: 7px;
    font-size: 14px;
    width: 72px;
}
.vsep-q1 { height: 22px; }
.quick {
    display: flex;
    gap: 12.4px;
    margin-left: 15px;
}
.ico-c { stroke: #555; }
.vsep-q2 {
    height: 22px;
    margin-left: 16px;
}
.menu-tabs {
    display: flex;
    gap: 40.4px;
    margin-left: 23px;
    height: 46px;
    align-items: center;
}
.menu-tabs span {
    position: relative;
    white-space: nowrap;
}
.menu-tabs .m-protect {
    margin-left: 6px;
}
.menu-tabs .active {
    color: #b5202f;
    font-weight: 600;
}
.menu-tabs .active::after {
    content: "";
    position: absolute;
    left: 0;
    right: 0;
    bottom: -4px;
    height: 2px;
    background-color: #b5202f;
}
.vsep-ai {
    height: 22px;
    margin-left: 26px;
}
.wps-ai {
    display: flex;
    align-items: center;
    gap: 5px;
    margin-left: 27px;
}
.ai-ico {
    width: 16px;
    height: 24px;
}
.menu-right {
    margin-left: auto;
    display: flex;
    align-items: center;
    gap: 25px;
    padding-right: 17px;
}
.share {
    width: 57px;
    height: 30px;
    border: 1px solid #1a73e8;
    border-radius: 4px;
    background-color: #fff;
    color: #1a73e8;
    font-size: 14px;
    display: flex;
    align-items: center;
    justify-content: center;
    margin-right: -6px;
}
.vsep-share { height: 26px; margin-right: -3px; }
.gear { stroke: #777; }
.dots circle { fill: #444; stroke: none; }

/* ribbon */
.ribbon {
    height: 92px;
    margin: 0 0 0 16px;
    width: 1888px;
    background-color: #fff;
    border-radius: 12px;
    box-shadow: 0 0 4px rgba(0,0,0,0.28);
    display: flex;
    padding: 5px 0;
    position: relative;
    z-index: 2;
    flex-shrink: 0;
}
.rgroup {
    display: flex;
    border-right: 1px solid #d8d8d8;
    position: relative;
}
.g1 { padding: 0 10px 0 14px; }
.g2 { padding: 0 5px 0 3px; }
.g3 { padding: 0 7px 0 6px; }
.g4 { padding: 0 4px 0 6px; }
.g5 { padding: 0 8px 0 6px; }
.g6 { padding: 0 0 0 7px; border-right: none; }
.tool {
    display: flex;
    flex-direction: column;
    align-items: center;
    padding-top: 7px;
}
.w60 { width: 60px; }
.w70 { width: 70px; }
.w80 { width: 80px; }
.w82 { width: 82px; }
.w88 { width: 88px; }
.w90 { width: 90px; }
.w98 { width: 98px; }
.w102 { width: 102px; }
.w106 { width: 106px; }
.w110 { width: 110px; }
.w116 { width: 116px; }
.w118 { width: 118px; }
.w126 { width: 126px; }
.w130 { width: 130px; }
.w166 { width: 166px; }
.ric {
    width: 44px;
    height: 36px;
}
.ric .blue { stroke: #3a6fe8; }
.ric .orange { stroke: #d2662a; }
.ric .red { stroke: #c8254a; }
.ric .purple { stroke: #8a6cf0; }
.knob circle { fill: #fff; }
.knob-b circle { fill: #fff; stroke: #3a6fe8; }
.svg-a {
    font-family: "Open Sans", sans-serif;
    font-size: 14px;
    fill: #444;
    stroke: none;
}
.blue-t { fill: #3a6fe8; }
.svg-big { font-size: 19px; }
.svg-mid { font-size: 18px; }
.svg-sm { font-size: 9px; }
.lbl {
    font-size: 14px;
    line-height: 18px;
    margin-top: 5px;
    white-space: nowrap;
    display: flex;
    align-items: center;
    color: #333;
}
.caret {
    width: 8px;
    height: 5px;
    margin-left: 3px;
}
.red-dot {
    position: absolute;
    left: 118px;
    top: 10px;
    width: 6px;
    height: 6px;
    border-radius: 50%;
    background-color: #ee5a5a;
}

/* main area */
.main {
    flex: 1;
    display: flex;
    position: relative;
    min-height: 0;
}
.side-left {
    width: 71px;
    border-right: 1px solid #dcdcdc;
    display: flex;
    flex-direction: column;
    align-items: center;
    gap: 26px;
    padding-top: 29px;
    flex-shrink: 0;
}
.doc {
    width: 1763px;
    padding-left: 366px;
    flex-shrink: 0;
}
.page-stub {
    width: 1026px;
    height: 16px;
    background-color: #fff;
    box-shadow: 0 1px 2px rgba(0,0,0,0.25);
}
.page {
    width: 1026px;
    height: 769px;
    margin-top: 18px;
    background-color: #fff;
    box-shadow: 0 0 2px rgba(0,0,0,0.3);
    padding: 54px 0 0 46px;
    display: flex;
    color: #000;
}
.bullet {
    width: 13px;
    height: 13px;
    border-radius: 50%;
    background-color: #000;
    margin: 18px 23px 0 0;
    flex-shrink: 0;
}
.page-text {
    font-family: "Lato", sans-serif;
    font-size: 42.5px;
    line-height: 49.1px;
    font-variant-ligatures: none;
    white-space: nowrap;
}
.page-text span {
    display: block;
}
.scroll-col {
    width: 15px;
    display: flex;
    flex-direction: column;
    align-items: flex-start;
    padding: 12px 0 6px;
}
.arr-up, .arr-down {
    width: 0;
    height: 0;
    margin-left: 1px;
    border-left: 4px solid transparent;
    border-right: 4px solid transparent;
}
.arr-up { border-bottom: 6px solid #666; }
.arr-down { border-top: 6px solid #666; margin-top: auto; }
.thumb {
    width: 10px;
    height: 55px;
    margin-top: 399px;
    border-radius: 5px;
    background-color: #d0d0d0;
}
.float-btn {
    position: absolute;
    left: 1786px;
    top: 13px;
    width: 40px;
    height: 40px;
    border-radius: 50%;
    background-color: #f5763a;
    border: 3px solid #fff;
    display: flex;
    align-items: center;
    justify-content: center;
}
.float-btn svg {
    width: 26px;
    height: 26px;
}
.side-right {
    width: 71px;
    border-left: 1px solid #d0d0d0;
    display: flex;
    flex-direction: column;
    align-items: center;
    gap: 26px;
    padding-top: 19px;
}
.sr { stroke: #4a5470; }
.sr.first { margin-bottom: -10px; stroke: #888; }
.sr.near { margin-top: -5px; }
.sr.dark { stroke: #444; }

/* status bar */
.statusbar {
    height: 30px;
    border-top: 1px solid #d8d8d8;
    display: flex;
    align-items: center;
    font-size: 14px;
    flex-shrink: 0;
}
.sb-left {
    width: 949px;
    padding-left: 23px;
    display: flex;
    align-items: center;
    flex-shrink: 0;
}
.sb-btn {
    width: 20px;
    height: 20px;
}
.thick { stroke-width: 2.4; }
.nav-lbl { margin-left: 6px; width: 73px; font-size: 14.5px; white-space: nowrap; }
.sb-first { margin-left: 23px; }
.sb-prev { margin-left: 18px; }
.sb-last { margin-left: 20px; }
.page-input {
    width: 136px;
    height: 25px;
    margin: 0 16px;
    background-color: #fff;
    border: 1px solid #c8c8c8;
    border-radius: 4px;
    display: flex;
    align-items: center;
    justify-content: center;
}
.back-lbl { margin-left: 20px; }
.sb-mid {
    display: flex;
    align-items: center;
}
.sb-arrow { margin: 0 15px 0 2px; }
.hand {
    width: 30px;
    height: 29px;
    background-color: #dcdcdc;
    border-radius: 4px;
    display: flex;
    align-items: center;
    justify-content: center;
}
.vsep-sb {
    height: 20px;
    margin-left: 10px;
}
.sb-minus { margin-left: 15px; }
.sb-plus { margin-left: 20px; }
.zoom-val { margin-left: 28px; width: 34px; font-size: 14px; }
.caret-z { margin-left: 11px; }
.vsep-z { margin-left: 16px; }
.sb-fit { margin: 0 3px 0 16px; }
.sb-view { margin: 0 2px 0 25px; }
.sb-rot { margin-left: 25px; }
.vsep-e { margin-left: 13px; }
.sb-exp { margin-left: 15px; }
.sb-right {
    margin-left: auto;
    padding-right: 19px;
    display: flex;
    gap: 20px;
}

/* taskbar */
.taskbar {
    height: 60px;
    background-color: #1f1f1f;
    color: #f0f0f0;
    display: flex;
    align-items: center;
    font-size: 14.5px;
    flex-shrink: 0;
}
.weather {
    width: 530px;
    display: flex;
    align-items: center;
    padding-left: 25px;
    position: relative;
}
.weather-ico {
    width: 32px;
    height: 36px;
}
.w-badge {
    position: absolute;
    left: 38px;
    top: -3px;
    width: 21px;
    height: 21px;
    border-radius: 50%;
    background-color: #f7a0aa;
    color: #222;
    font-size: 13px;
    display: flex;
    align-items: center;
    justify-content: center;
}
.w-text {
    display: flex;
    flex-direction: column;
    margin-left: 7px;
    line-height: 20px;
}
.win-logo {
    width: 29px;
    height: 29px;
}
.search {
    width: 275px;
    height: 39px;
    margin-left: 17px;
    border-radius: 20px;
    background-color: #3e3e3e;
    display: flex;
    align-items: center;
    padding-left: 15px;
    font-size: 16.5px;
    color: #d8d8d8;
}
.search-ico {
    width: 20px;
    height: 20px;
    fill: none;
    stroke: #e8e8e8;
    stroke-width: 1.8;
}
.search span { margin-left: 11px; }
.bagpipe {
    width: 60px;
    height: 39px;
    margin-left: auto;
    margin-right: 6px;
}
.apps {
    display: flex;
    gap: 5px;
    margin-left: 4px;
}
.app {
    width: 50px;
    height: 50px;
    border-radius: 5px;
    display: flex;
    align-items: center;
    justify-content: center;
    position: relative;
}
.app svg {
    width: 32px;
    height: 32px;
    overflow: visible;
}
.fb {
    font-family: "Liberation Sans", sans-serif;
    font-weight: 700;
    font-size: 26px;
    fill: #fff;
    text-anchor: middle;
}
.app-dot::after {
    content: "";
    position: absolute;
    left: 22px;
    bottom: 0;
    width: 6px;
    height: 6px;
    border-radius: 50%;
    background-color: #9a9a9a;
}
.app-on {
    background-color: #2f2f2f;
}
.app-on::after {
    content: "";
    position: absolute;
    left: 15px;
    bottom: 1px;
    width: 20px;
    height: 4px;
    border-radius: 2px;
    background-color: #d9a0e0;
}
.tray {
    margin-left: auto;
    display: flex;
    align-items: center;
    padding-right: 24px;
    font-size: 15px;
}
.tray-up {
    width: 16px;
    height: 16px;
    fill: none;
    stroke: #f0f0f0;
    stroke-width: 1.6;
}
.lang {
    display: flex;
    flex-direction: column;
    align-items: center;
    line-height: 20px;
    margin: 0 22px 0 26px;
}
.tray-ico {
    width: 20px;
    height: 20px;
    fill: none;
    stroke: #f0f0f0;
    stroke-width: 1.4;
    margin-right: 10px;
}
.tray-ico .on {
    fill: #f0f0f0;
    stroke: none;
}
.clock {
    display: flex;
    flex-direction: column;
    align-items: flex-end;
    line-height: 20px;
    margin-left: 12px;
}
```
